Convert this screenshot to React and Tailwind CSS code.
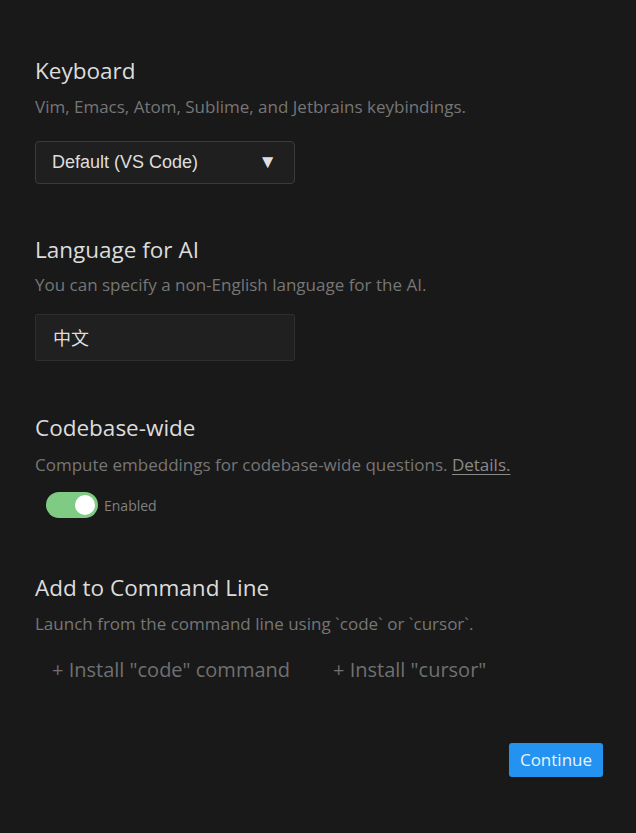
import React, { useState } from "react";

const Section = ({ title, children, className = "" }) => {
  return (
    <div className={className}>
      <h2 className="text-[22.5px] leading-[30px] text-[#dcdcdc] font-normal">{title}</h2>
      {children}
    </div>
  );
};

const Toggle = ({ on, onChange }) => {
  return (
    <button
      onClick={() => onChange(!on)}
      className={`relative w-[52px] h-[26px] rounded-full ${on ? "bg-[#7fcb83]" : "bg-[#444]"}`}
    >
      <span
        className={`absolute top-[3px] w-[20px] h-[20px] rounded-full bg-white ${on ? "left-[29px]" : "left-[3px]"}`}
      />
    </button>
  );
};

export default function App() {
  const [enabled, setEnabled] = useState(true);

  return (
    <div
      className="w-[636px] h-[833px] bg-[#191919] px-[35px] pt-[56px]"
      style={{ fontFamily: '"Open Sans", "Noto Sans", sans-serif' }}
    >
      {/* Keyboard */}
      <Section title="Keyboard">
        <p className="mt-[11px] text-[17px] leading-[20px] text-[#767676]">
          Vim, Emacs, Atom, Sublime, and Jetbrains keybindings.
        </p>
        <div
          className="mt-[24px] w-[260px] h-[43px] flex items-center justify-between pl-[16px] pr-[17px] bg-[#1f1f1f] border border-[#3b3b3b] rounded-[4px] text-[#dedede] text-[18px]"
          style={{ fontFamily: '"Liberation Sans", Arial, sans-serif' }}
        >
          <span>Default (VS Code)</span>
          <span className="text-[19px]">▼</span>
        </div>
      </Section>

      {/* Language */}
      <Section title="Language for AI" className="mt-[51px]">
        <p className="mt-[10px] text-[17px] leading-[20px] text-[#767676]">
          You can specify a non-English language for the AI.
        </p>
        <div
          className="mt-[19px] w-[260px] h-[47px] flex items-center pl-[17px] bg-[#202020] border border-[#2e2e2e] rounded-[2px] text-[#dedede] text-[18px]"
          style={{ fontFamily: '"Noto Sans CJK SC", sans-serif' }}
        >
          中文
        </div>
      </Section>

      {/* Codebase-wide */}
      <Section title="Codebase-wide" className="mt-[52px]">
        <p className="mt-[12px] text-[17px] leading-[20px] text-[#767676]">
          Compute embeddings for codebase-wide questions.{" "}
          <span className="underline underline-offset-[3px] text-[#8a8a8a]">Details.</span>
        </p>
        <div className="mt-[17px] ml-[11px] flex items-center gap-[6px]">
          <Toggle on={enabled} onChange={setEnabled} />
          <span className="text-[14px] text-[#808080]">Enabled</span>
        </div>
      </Section>

      {/* Command line */}
      <Section title="Add to Command Line" className="mt-[55px]">
        <p className="mt-[11px] text-[17px] leading-[20px] text-[#767676]">
          Launch from the command line using `code` or `cursor`.
        </p>
        <div className="mt-[22px] flex items-center text-[20px] leading-[28px] text-[#707070]">
          <button className="ml-[17px]">+ Install "code" command</button>
          <button className="ml-[43px]">+ Install "cursor"</button>
        </div>
      </Section>

      <div className="mt-[59px] flex justify-end">
        <button className="w-[94px] h-[34px] mr-[-2px] bg-[#2492f0] text-[#e8f2ff] text-[17px] rounded-[3px]">
          Continue
        </button>
      </div>
    </div>
  );
}
